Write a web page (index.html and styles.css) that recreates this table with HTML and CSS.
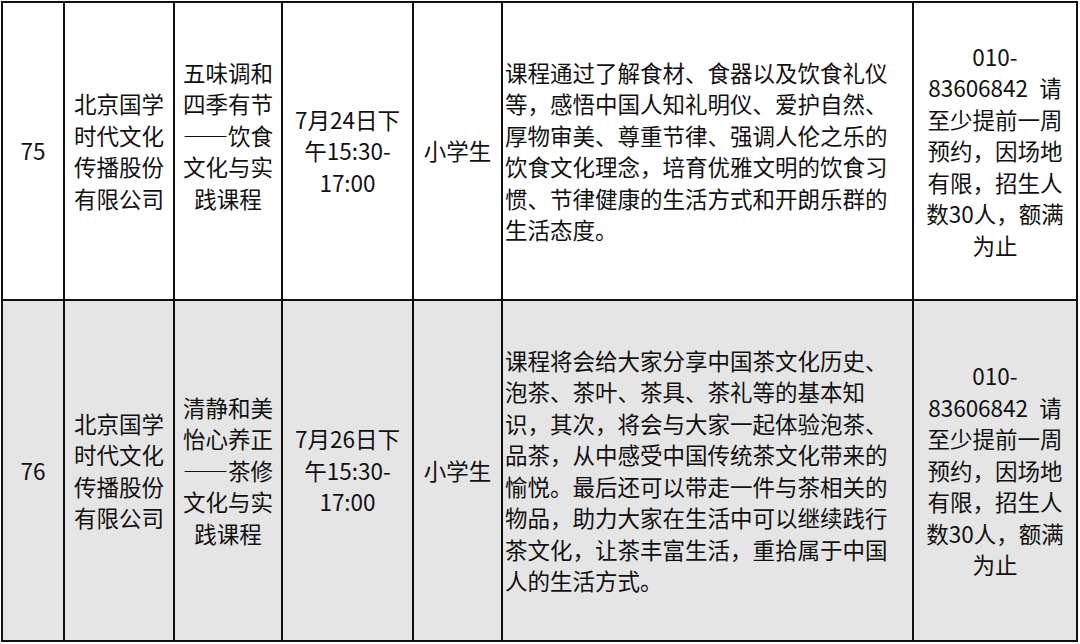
FILE: index.html
```html
<!DOCTYPE html>
<html lang="zh-CN">
<head>
<meta charset="utf-8">
<title>课程列表</title>
<link rel="stylesheet" href="styles.css">
</head>
<body>
<table class="grid">
  <colgroup>
    <col class="c-num">
    <col class="c-org">
    <col class="c-course">
    <col class="c-time">
    <col class="c-who">
    <col class="c-desc">
    <col class="c-contact">
  </colgroup>
  <tbody>
    <tr class="row row--first">
      <td class="cell">75</td>
      <td class="cell">北京国学时代文化传播股份有限公司</td>
      <td class="cell cell--course cell--gap">五味调和四季有节——饮食文化与实践课程</td>
      <td class="cell">7月24日下<br>午15:30-<br>17:00</td>
      <td class="cell">小学生</td>
      <td class="cell cell--desc">课程通过了解食材、食器以及饮食礼仪等，感悟中国人知礼明仪、爱护自然、厚物审美、尊重节律、强调人伦之乐的饮食文化理念，培育优雅文明的饮食习惯、节律健康的生活方式和开朗乐群的生活态度。</td>
      <td class="cell cell--contact">010-<br>83606842&ensp;请<br>至少提前一周<br>预约，因场地<br>有限，招生人<br>数30人，额满<br>为止</td>
    </tr>
    <tr class="row row--second">
      <td class="cell">76</td>
      <td class="cell">北京国学时代文化传播股份有限公司</td>
      <td class="cell cell--course">清静和美怡心养正——茶修文化与实践课程</td>
      <td class="cell">7月26日下<br>午15:30-<br>17:00</td>
      <td class="cell">小学生</td>
      <td class="cell cell--desc">课程将会给大家分享中国茶文化历史、泡茶、茶叶、茶具、茶礼等的基本知识，其次，将会与大家一起体验泡茶、品茶，从中感受中国传统茶文化带来的愉悦。最后还可以带走一件与茶相关的物品，助力大家在生活中可以继续践行茶文化，让茶丰富生活，重拾属于中国人的生活方式。</td>
      <td class="cell cell--contact">010-<br>83606842&ensp;请<br>至少提前一周<br>预约，因场地<br>有限，招生人<br>数30人，额满<br>为止</td>
    </tr>
  </tbody>
</table>
</body>
</html>
```

FILE: styles.css
```css
html, body {
  margin: 0;
  padding: 0;
  background: #ffffff;
}

body {
  font-family: "Noto Sans CJK SC", "Noto Sans", sans-serif;
  font-size: 22.5px;
  line-height: 31.5px;
  color: #111111;
}

.grid {
  border-collapse: collapse;
  table-layout: fixed;
  margin: 1px 0 0 1px;
}

.c-num { width: 62px; }
.c-org { width: 110px; }
.c-course { width: 108px; }
.c-time { width: 131px; }
.c-who { width: 89px; }
.c-desc { width: 411px; }
.c-contact { width: 164px; }

.row--first {
  height: 298px;
  background: #ffffff;
}

.row--second {
  height: 341px;
  background: #e5e5e5;
}

.cell {
  border: 2px solid #111111;
  padding: 0 4px;
  text-align: center;
  vertical-align: middle;
}

.cell--course {
  padding: 0 4px;
}

.cell--gap {
  padding-bottom: 31px;
}

.cell--desc {
  text-align: left;
  padding: 0 14px 0 2px;
}

.cell--contact {
  padding: 0 6px;
}
```
